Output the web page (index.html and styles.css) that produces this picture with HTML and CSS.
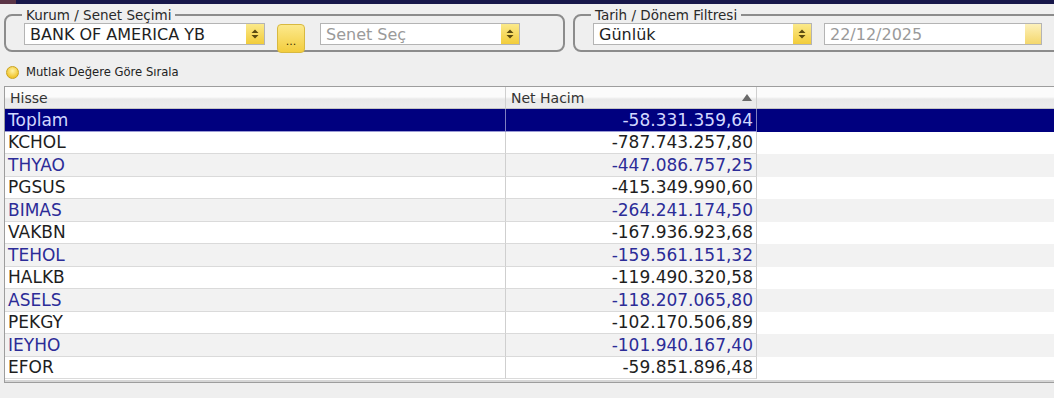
FILE: index.html
```html
<!DOCTYPE html>
<html lang="tr">
<head>
    <meta charset="UTF-8">
    <meta name="viewport" content="width=device-width, initial-scale=1.0">
    <title>Net Hacim - Kurum Dağılımı</title>
    <link rel="stylesheet" href="styles.css">
</head>
<body>
    <div class="titlebar"><span class="app-icon"></span></div>

    <div class="filters">
        <fieldset class="group group-kurum">
            <legend>Kurum / Senet Seçimi</legend>
            <div class="combo combo-kurum">
                <span class="combo-text">BANK OF AMERICA YB</span>
                <span class="spin"><svg width="8" height="10" viewBox="0 0 8 10"><path d="M4 0.5L7.5 4H0.5Z M4 9.5L0.5 6H7.5Z" fill="#5a4a10"/></svg></span>
            </div>
            <button class="more">...</button>
            <div class="combo combo-senet">
                <span class="combo-text placeholder">Senet Seç</span>
                <span class="spin"><svg width="8" height="10" viewBox="0 0 8 10"><path d="M4 0.5L7.5 4H0.5Z M4 9.5L0.5 6H7.5Z" fill="#5a4a10"/></svg></span>
            </div>
        </fieldset>

        <fieldset class="group group-tarih">
            <legend>Tarih / Dönem Filtresi</legend>
            <div class="combo combo-donem">
                <span class="combo-text">Günlük</span>
                <span class="spin"><svg width="8" height="10" viewBox="0 0 8 10"><path d="M4 0.5L7.5 4H0.5Z M4 9.5L0.5 6H7.5Z" fill="#5a4a10"/></svg></span>
            </div>
            <div class="combo combo-date">
                <span class="combo-text placeholder">22/12/2025</span>
                <span class="date-btn"></span>
            </div>
        </fieldset>
    </div>

    <label class="sort-opt"><span class="radio"></span>Mutlak Değere Göre Sırala</label>

    <div class="grid">
        <div class="grid-row grid-head">
            <div class="cell">Hisse</div>
            <div class="cell cell-sort">Net Hacim <span class="sort-up"></span></div>
            <div class="cell cell-fill"></div>
        </div>
        <div id="rows"></div>
    </div>

    <script>
        // Net hacim listesi (ilk satır toplam)
        const data = [
            ["Toplam", "-58.331.359,64"],
            ["KCHOL", "-787.743.257,80"],
            ["THYAO", "-447.086.757,25"],
            ["PGSUS", "-415.349.990,60"],
            ["BIMAS", "-264.241.174,50"],
            ["VAKBN", "-167.936.923,68"],
            ["TEHOL", "-159.561.151,32"],
            ["HALKB", "-119.490.320,58"],
            ["ASELS", "-118.207.065,80"],
            ["PEKGY", "-102.170.506,89"],
            ["IEYHO", "-101.940.167,40"],
            ["EFOR", "-59.851.896,48"]
        ];

        const rows = document.getElementById('rows');
        rows.innerHTML = data.map((r, i) => {
            let cls = i % 2 === 1 ? 'odd' : 'even';
            if (i === 0) cls = 'selected';
            return `<div class="grid-row ${cls}">
                <div class="cell">${r[0]}</div>
                <div class="cell cell-num">${r[1]}</div>
                <div class="cell cell-fill"></div>
            </div>`;
        }).join('');
    </script>
</body>
</html>
```

FILE: styles.css
```css
body {
    margin: 0;
    background: #efefef;
    font-family: 'DejaVu Sans', Verdana, sans-serif;
    color: #1e1e1e;
    overflow: hidden;
}
.titlebar {
    height: 4px;
    background: #17174a;
}
.app-icon {
    display: block;
    width: 16px;
    height: 4px;
    background: #5b3446;
}
.filters {
    display: flex;
    gap: 8px;
    margin: 3px 0 0 4px;
    white-space: nowrap;
}
.group {
    display: flex;
    align-items: flex-start;
    flex-shrink: 0;
    box-sizing: border-box;
    margin: 0;
    padding: 0 10px 5px 18px;
    border: 2px solid #8c8c8c;
    border-radius: 8px;
    min-width: 0;
}
.group legend {
    font-size: 13.5px;
    line-height: 16px;
    padding: 0 4px;
    margin-left: -2px;
    color: #2a2a2a;
}
.group-kurum {
    width: 561px;
}
.group-tarih {
    width: 520px;
}
.combo {
    display: flex;
    align-items: center;
    height: 22px;
    box-sizing: border-box;
    background: #fff;
    border: 1px solid #b4b4b4;
}
.combo-text {
    flex: 1;
    font-size: 16px;
    padding-left: 5px;
    color: #1e1e1e;
}
.combo-text.placeholder {
    color: #9a9a9a;
}
.spin {
    display: flex;
    align-items: center;
    justify-content: center;
    width: 18px;
    height: 20px;
    background: linear-gradient(#fbe98a, #f2cc3a);
}
.combo-kurum { width: 241px; }
.combo-senet { width: 200px; margin-left: 15px; }
.combo-donem { width: 219px; }
.combo-date { width: 218px; margin-left: 12px; }
.date-btn {
    width: 16px;
    height: 20px;
    background: linear-gradient(#fdf1bb, #f4d76c);
}
.more {
    width: 28px;
    height: 29px;
    margin: 1px 0 -8px 12px;
    padding: 0 0 4px;
    border: 1px solid #d8b940;
    border-radius: 4px;
    background: linear-gradient(#fce98c, #f3cd3e);
    font-family: inherit;
    font-size: 11px;
    color: #3a3000;
    display: flex;
    align-items: flex-end;
    justify-content: center;
}
.sort-opt {
    display: flex;
    align-items: center;
    gap: 7px;
    height: 14px;
    margin: 13px 0 0 6px;
    font-size: 11.6px;
    color: #222;
}
.radio {
    width: 11px;
    height: 11px;
    border-radius: 50%;
    border: 1px solid #c9a21e;
    background: radial-gradient(circle at 50% 35%, #fff3a6, #f1c630 70%);
}
.grid {
    margin: 7px 0 0 4px;
    height: 297px;
    width: calc(100% + 10px);
    box-sizing: border-box;
    border: 1px solid #9d9d9d;
    border-right: none;
    background: #fff;
    box-shadow: inset 0 -2px 0 #d6d6d6;
}
.grid-row {
    display: grid;
    grid-template-columns: 501px 251px 1fr;
    height: 22.5px;
    font-size: 17px;
}
.cell {
    display: flex;
    align-items: center;
    padding: 0 3px;
    border-right: 1px solid #cfcfcf;
    border-bottom: 1px solid #dadada;
    white-space: nowrap;
}
.cell-fill {
    border: none;
}
.cell-num {
    justify-content: flex-end;
    padding-right: 3px;
}
.grid-head {
    height: 22px;
    font-size: 14px;
    color: #333;
    background: linear-gradient(#fbfbfb 45%, #e9e9e9 55%, #ededed);
}
.grid-head .cell {
    border-bottom: 1px solid #c4c4c4;
    padding-left: 5px;
}
.grid-head .cell-fill {
    border-bottom: 1px solid #c4c4c4;
}
.cell-sort {
    justify-content: space-between;
}
.sort-up {
    width: 0;
    height: 0;
    margin-right: 1px;
    border-left: 5px solid transparent;
    border-right: 5px solid transparent;
    border-bottom: 7px solid #6a6a6a;
}
.odd {
    background: #fff;
    color: #1e1e1e;
}
.even {
    background: #f2f2f2;
    color: #2c2c98;
}
.selected {
    background: #00007f;
    color: #d2d8ff;
}
.selected .cell {
    border-bottom-color: #9b9bd4;
    border-right-color: #7f7fc0;
}
```
